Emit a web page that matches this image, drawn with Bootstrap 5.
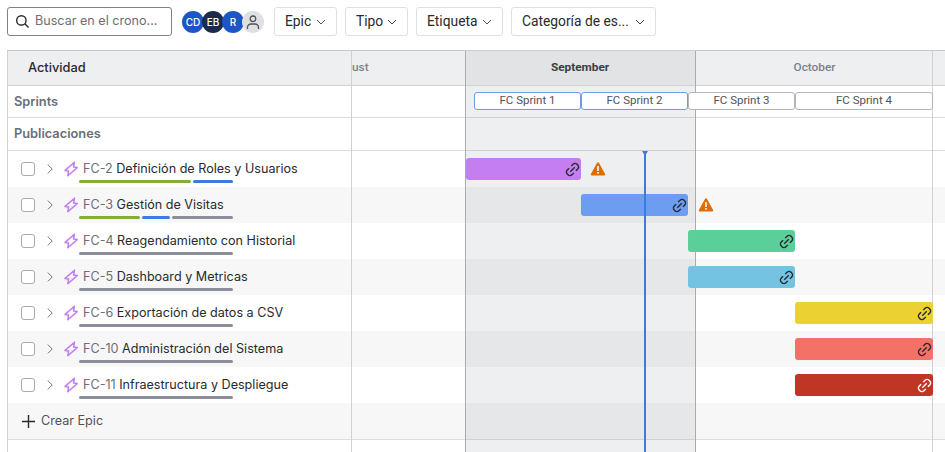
<!DOCTYPE html>
<html lang="es">
<head>
  <meta charset="UTF-8" />
  <title>Cronograma</title>
  <link href="https://cdn.jsdelivr.net/npm/bootstrap@5.3.0/dist/css/bootstrap.min.css" rel="stylesheet" />
  <style>
    html, body { height: 100%; overflow: hidden; }
    body { font-family: Inter, "Liberation Sans", sans-serif; font-size: 12.6px; color: #292a2e; background: #fff; }

    /* barra de filtros */
    .tool-bar { height: 50px; padding: 7px 0 0 7px; }
    .search-box { width: 165px; height: 29px; border: 1px solid #7d818a; border-radius: 3px; padding-left: 7px; gap: 5px; color: #6b6e76; }
    .search-box span { white-space: nowrap; }
    .avatars { margin-left: 10px; margin-right: 10px; width: 82px; }
    .avatar-dot { width: 22px; height: 22px; border-radius: 50%; margin-right: -2px; font-size: 10px; font-weight: 500; color: #fff; flex: none; }
    .avatar-blue { background: #1d55c4; }
    .avatar-navy { background: #1c2b4a; }
    .avatar-none { background: #dfe0e3; }
    .filter-btn { height: 29px; font-family: Roboto, sans-serif; font-size: 13.8px; color: #292a2e; border: 1px solid #dcdfe4; border-radius: 3px; padding: 0 10px; background: #fff; white-space: nowrap; }
    .filter-epic { width: 63px; }
    .filter-tipo { width: 63px; }
    .filter-etiqueta { width: 87px; }
    .filter-categoria { width: 145px; }
    .filter-group { gap: 8px; }

    /* tabla del cronograma */
    .gantt-wrap { margin-left: 7px; width: 960px; height: 402px; border-left: 1px solid #d0d1d4; border-top: 1px solid #c9cacd; }
    .gantt-row { display: flex; height: 36px; }
    .gantt-row.striped { background: #f7f7f8; }
    .left-cell { width: 343px; flex: none; position: relative; }
    .track { flex: 1; position: relative; }
    .head-row { height: 35px; background: #eeeff1; border-bottom: 1px solid #d0d1d4; }
    .sprint-row { height: 32px; border-bottom: 1px solid #dcdde0; }
    .pub-row { height: 33px; border-bottom: 1px solid #dcdde0; }
    .crear-row { height: 37px; background: #f7f7f8; border-bottom: 1px solid #dcdde0; }
    .head-title { font-weight: 500; font-size: 12.8px; padding-left: 20px; }
    .side-title { font-weight: 600; font-size: 12.8px; color: #6b6e76; padding-left: 6px; }
    .month-name { position: absolute; top: 0; height: 34px; font-family: Roboto, sans-serif; font-size: 11.8px; font-weight: 500; color: #7d818a; }
    .month-now { color: #3b3d42; font-weight: 700; background: #e2e3e5; }

    /* columna de mes y linea de hoy */
    .month-line { position: absolute; top: 0; bottom: 0; width: 1px; background: #d0d1d4; z-index: 2; }
    .month-shade { position: absolute; top: 35px; bottom: 0; left: 457px; width: 231px; background: rgba(100, 107, 120, .11); z-index: 1; border-left: 1px solid #a9abaf; border-right: 1px solid #a9abaf; }
    .head-edge { position: absolute; top: 0; height: 35px; width: 1px; background: #a9abaf; z-index: 3; }
    .today-line { position: absolute; left: 636px; top: 100px; bottom: 0; width: 2px; background: #3f7ae0; z-index: 4; }
    .today-head { position: absolute; left: -2px; top: 0; width: 0; height: 0; border-left: 3px solid transparent; border-right: 3px solid transparent; border-top: 5px solid #3f7ae0; }

    .sprint-chip { position: absolute; top: 6px; height: 18px; background: #fff; border: 1px solid #b4b6bb; border-radius: 3px; font-family: Roboto, sans-serif; font-size: 11.5px; color: #505258; z-index: 3; line-height: 15px; text-align: center; }
    .chip-active { border-color: #6d9bea; }

    .epic-bar { position: absolute; top: 7px; height: 22px; border-radius: 3px; z-index: 3; padding-right: 1px; }
    .warn-icon { position: absolute; top: 10px; z-index: 3; }

    .row-check { width: 14px; height: 14px; border: 1.5px solid #a9abb0; border-radius: 3px; margin-left: 13px; background: #fff; flex: none; }
    .row-chev { margin-left: 8px; flex: none; }
    .row-bolt { margin-left: 6px; flex: none; }
    .row-body { margin-left: 4px; height: 36px; line-height: 36px; white-space: nowrap; margin-top: -1px; }
    .row-key { color: #6b6e76; }
    .progress-strip { position: absolute; left: 71px; top: 29px; width: 154px; height: 3px; display: flex; gap: 2px; }
    .progress-strip i { display: block; height: 3px; border-radius: 2px; }
    .crear-link { color: #505258; padding-left: 13px; gap: 5px; }
  </style>
</head>
<body>
  <svg width="0" height="0" class="position-absolute">
    <defs>
      <symbol id="ic-bolt" viewBox="0 0 16 16"><path d="M11.5 1.2 2 9.4l3.6.6-.8 4.8L14.2 6.6l-3.6-.6z" fill="none" stroke="#c07ef2" stroke-width="1.5" stroke-linejoin="round"/></symbol>
      <symbol id="ic-chev" viewBox="0 0 16 16"><path d="M5.5 3 10.5 8l-5 5" fill="none" stroke="#6b6e76" stroke-width="1.1"/></symbol>
      <symbol id="ic-down" viewBox="0 0 10 10"><path d="M1 3l4 4 4-4" fill="none" stroke="#505258" stroke-width="1"/></symbol>
      <symbol id="ic-link" viewBox="0 0 16 16"><g fill="none" stroke="currentColor" stroke-width="1.5"><path d="M6.6 4.4 8.6 2.4a3 3 0 0 1 4.3 0l.7.7a3 3 0 0 1 0 4.3l-2 2"/><path d="M9.4 11.6l-2 2a3 3 0 0 1-4.3 0l-.7-.7a3 3 0 0 1 0-4.3l2-2"/><path d="M5.6 10.4 10.4 5.6"/></g></symbol>
      <symbol id="ic-warn" viewBox="0 0 16 16"><path d="M8 1.2c.4 0 .7.2.9.5l6.2 11.4c.4.7-.1 1.5-.9 1.5H1.8c-.8 0-1.3-.8-.9-1.5L7.1 1.7c.2-.3.5-.5.9-.5z" fill="#e06c00"/><rect x="7.2" y="5" width="1.6" height="5" fill="#fff"/><rect x="7.2" y="11" width="1.6" height="1.7" fill="#fff"/></symbol>
    </defs>
  </svg>

  <div class="tool-bar d-flex align-items-start">
    <div class="search-box d-flex align-items-center">
      <svg width="15" height="15" viewBox="0 0 16 16"><circle cx="6.8" cy="6.8" r="5" fill="none" stroke="#292a2e" stroke-width="1.5"/><path d="M10.5 10.5 14.5 14.5" stroke="#292a2e" stroke-width="1.5"/></svg>
      <span>Buscar en el crono...</span>
    </div>
    <div class="avatars d-flex mt-1">
      <div class="avatar-dot avatar-blue d-flex align-items-center justify-content-center">CD</div>
      <div class="avatar-dot avatar-navy d-flex align-items-center justify-content-center">EB</div>
      <div class="avatar-dot avatar-blue d-flex align-items-center justify-content-center">R</div>
      <div class="avatar-dot avatar-none d-flex align-items-center justify-content-center">
        <svg width="16" height="16" viewBox="0 0 16 16"><circle cx="8" cy="4.8" r="2.8" fill="none" stroke="#505258" stroke-width="1.3"/><path d="M2.5 15v-1.5a3.5 3.5 0 0 1 3.5-3.5h4a3.5 3.5 0 0 1 3.5 3.5V15" fill="none" stroke="#505258" stroke-width="1.3"/></svg>
      </div>
    </div>
    <div class="filter-group d-flex">
      <button class="filter-btn filter-epic d-flex align-items-center justify-content-between" type="button">Epic <svg width="10" height="10"><use href="#ic-down"/></svg></button>
      <button class="filter-btn filter-tipo d-flex align-items-center justify-content-between" type="button">Tipo <svg width="10" height="10"><use href="#ic-down"/></svg></button>
      <button class="filter-btn filter-etiqueta d-flex align-items-center justify-content-between" type="button">Etiqueta <svg width="10" height="10"><use href="#ic-down"/></svg></button>
      <button class="filter-btn filter-categoria d-flex align-items-center justify-content-between" type="button">Categoría de es... <svg width="10" height="10"><use href="#ic-down"/></svg></button>
    </div>
  </div>

  <div class="gantt-wrap position-relative" id="gantt">
    <div class="month-shade"></div>
    <div class="month-line" style="left:343px"></div>
    <div class="month-line" style="left:924px"></div>
    <div class="head-edge" style="left:457px"></div>
    <div class="head-edge" style="left:687px"></div>
    <div class="today-line"><div class="today-head"></div></div>

    <div class="gantt-row head-row">
      <div class="left-cell head-title d-flex align-items-center">Actividad</div>
      <div class="track">
        <div class="month-name d-flex align-items-center" style="left:1px;width:113px">ust</div>
        <div class="month-name month-now d-flex align-items-center justify-content-center" style="left:114px;width:230px">September</div>
        <div class="month-name d-flex align-items-center justify-content-center" style="left:345px;width:237px">October</div>
      </div>
    </div>
    <div class="gantt-row sprint-row">
      <div class="left-cell side-title d-flex align-items-center">Sprints</div>
      <div class="track" id="sprintTrack"></div>
    </div>
    <div class="gantt-row pub-row">
      <div class="left-cell side-title d-flex align-items-center">Publicaciones</div>
      <div class="track"></div>
    </div>
    <div id="epicRows"></div>
    <div class="gantt-row crear-row">
      <div class="left-cell crear-link d-flex align-items-center">
        <svg width="15" height="15" viewBox="0 0 15 15"><path d="M7.5 1v13M1 7.5h13" stroke="#292a2e" stroke-width="1.4"/></svg>
        <span>Crear Epic</span>
      </div>
      <div class="track"></div>
    </div>
  </div>

  <script>
    // posiciones en px respecto al inicio de la pista (x = 351)
    const sprints = [
      { name: "FC Sprint 1", left: 123, width: 107, active: true },
      { name: "FC Sprint 2", left: 230, width: 107, active: true },
      { name: "FC Sprint 3", left: 337, width: 107 },
      { name: "FC Sprint 4", left: 444, width: 138 }
    ];
    const epics = [
      { key: "FC-2", title: "Definición de Roles y Usuarios", left: 115, width: 115, color: "#c57ef2", warn: 239, parts: [["#84ad3a", 112], ["#3f7ae0", 40]] },
      { key: "FC-3", title: "Gestión de Visitas", left: 230, width: 107, color: "#6c9df0", warn: 347, parts: [["#84ad3a", 61], ["#3f7ae0", 28], ["#8c8f9a", 61]] },
      { key: "FC-4", title: "Reagendamiento con Historial", left: 337, width: 107, color: "#5bcf9a", parts: [["#8c8f9a", 154]] },
      { key: "FC-5", title: "Dashboard y Metricas", left: 337, width: 107, color: "#75c3e3", parts: [["#8c8f9a", 154]] },
      { key: "FC-6", title: "Exportación de datos a CSV", left: 444, width: 138, color: "#ebd132", parts: [["#8c8f9a", 154]] },
      { key: "FC-10", title: "Administración del Sistema", left: 444, width: 138, color: "#f37166", parts: [["#8c8f9a", 154]] },
      { key: "FC-11", title: "Infraestructura y Despliegue", left: 444, width: 138, color: "#c03625", linkColor: "#fff", parts: [["#8c8f9a", 154]] }
    ];

    document.getElementById("sprintTrack").innerHTML = sprints.map((s) =>
      `<div class="sprint-chip ${s.active ? "chip-active" : ""}" style="left:${s.left}px;width:${s.width}px">${s.name}</div>`
    ).join("");

    document.getElementById("epicRows").innerHTML = epics.map((e, i) => `
      <div class="gantt-row ${i % 2 ? "striped" : ""}">
        <div class="left-cell d-flex align-items-center">
          <div class="row-check"></div>
          <svg class="row-chev" width="14" height="14"><use href="#ic-chev"/></svg>
          <svg class="row-bolt" width="16" height="16"><use href="#ic-bolt"/></svg>
          <div class="row-body"><span class="row-key">${e.key}</span> ${e.title}</div>
          <div class="progress-strip">${e.parts.map((p) => `<i style="background:${p[0]};width:${p[1]}px"></i>`).join("")}</div>
        </div>
        <div class="track">
          <div class="epic-bar d-flex align-items-center justify-content-end" style="left:${e.left}px;width:${e.width}px;background:${e.color};color:${e.linkColor || "#292a2e"}">
            <svg width="15" height="15"><use href="#ic-link"/></svg>
          </div>
          ${e.warn ? `<svg class="warn-icon" style="left:${e.warn}px" width="16" height="16"><use href="#ic-warn"/></svg>` : ""}
        </div>
      </div>`
    ).join("");
  </script>
  <script src="https://cdn.jsdelivr.net/npm/bootstrap@5.3.0/dist/js/bootstrap.bundle.min.js"></script>
</body>
</html>
